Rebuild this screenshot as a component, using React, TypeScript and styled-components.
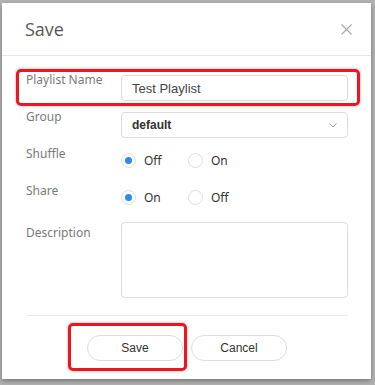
import React, {useState} from 'react';
import styled, {createGlobalStyle} from 'styled-components';

const GlobalStyle = createGlobalStyle`
    html, body {
        margin: 0;
        padding: 0;
        background: #b3b3b3;
        font-family: "Noto Sans", "Open Sans", Arial, sans-serif;
    }
`;

const Page = styled.div`
    padding: 3px 4px 6px 2px;
`;

const Modal = styled.div`
    width: 369px;
    height: 376px;
    background: #fff;
    box-shadow: 0 2px 5px rgba(0, 0, 0, 0.35);
    display: flex;
    flex-direction: column;
`;

const Header = styled.div`
    height: 52px;
    display: flex;
    align-items: center;
    justify-content: space-between;
    padding: 0 19px 0 23px;
    border-bottom: 1px solid #e6e6e6;
`;

const Title = styled.h2`
    margin: 0;
    font-family: "Open Sans", "Noto Sans", sans-serif;
    font-size: 18px;
    font-weight: 400;
    color: #595959;
`;

const CloseButton = styled.button`
    width: 12px;
    height: 12px;
    padding: 0;
    border: 0;
    background: none;
    display: flex;
    align-items: center;
    justify-content: center;
    cursor: pointer;
`;

const Body = styled.div`
    padding: 13px 0 0 14px;
`;

const Row = styled.div<{ highlight?: boolean }>`
    width: 330px;
    display: grid;
    grid-template-columns: 95px 227px;
    padding: 3px 1px 2px 7px;
    border: 3px solid ${props => props.highlight ? '#ee1420' : 'transparent'};
    border-radius: 5px;
    box-shadow: ${props => props.highlight ? '0 0 3px rgba(0, 0, 0, 0.35)' : 'none'};
`;

const Label = styled.label<{ offset?: number }>`
    font-size: 12px;
    line-height: 14px;
    color: #7a7a7a;
    margin-top: ${props => (props.offset ?? 0) - 2}px;
`;

const TextInput = styled.input`
    box-sizing: border-box;
    width: 227px;
    height: 26px;
    border: 1px solid #dcdcdc;
    border-radius: 4px;
    padding: 0 10px;
    font-family: "Liberation Sans", Arial, sans-serif;
    font-size: 13px;
    color: #444;
    outline: none;
`;

const SelectBox = styled.div`
    box-sizing: border-box;
    width: 227px;
    height: 26px;
    border: 1px solid #dcdcdc;
    border-radius: 4px;
    padding: 0 10px 0 10px;
    display: flex;
    align-items: center;
    justify-content: space-between;
    font-family: "Liberation Sans", Arial, sans-serif;
    font-size: 12px;
    font-weight: 700;
    color: #333;
`;

const RadioGroup = styled.div`
    height: 26px;
    padding-bottom: 4px;
    box-sizing: border-box;
    display: flex;
    align-items: center;
`;

const RadioOption = styled.label`
    width: 67px;
    display: flex;
    align-items: center;
    gap: 8px;
    font-size: 12px;
    color: #333;
    cursor: pointer;
`;

const RadioCircle = styled.span<{ checked: boolean }>`
    box-sizing: border-box;
    width: 15px;
    height: 15px;
    border: 1px solid #dedede;
    border-radius: 50%;
    display: flex;
    align-items: center;
    justify-content: center;

    &::after {
        content: '';
        width: 7px;
        height: 7px;
        border-radius: 50%;
        background: ${props => props.checked ? '#2a8cf0' : 'transparent'};
    }
`;

const TextArea = styled.textarea`
    box-sizing: border-box;
    width: 227px;
    height: 76px;
    margin-top: -1px;
    border: 1px solid #dcdcdc;
    border-radius: 4px;
    resize: none;
    outline: none;
`;

const Footer = styled.div`
    margin: 12px 23px 0 24px;
    padding-top: 19px;
    border-top: 1px solid #ececec;
    display: flex;
    justify-content: center;
    gap: 8px;
`;

const ButtonSlot = styled.div`
    position: relative;
`;

const Highlight = styled.div`
    position: absolute;
    top: -12px;
    left: -19px;
    right: -4px;
    bottom: -10px;
    border: 3px solid #ee1420;
    border-radius: 5px;
    box-shadow: 0 0 3px rgba(0, 0, 0, 0.35);
    pointer-events: none;
`;

const PillButton = styled.button`
    width: 96px;
    height: 26px;
    border: 1px solid #dcdcdc;
    border-radius: 13px;
    background: #fff;
    font-family: "Liberation Sans", Arial, sans-serif;
    font-size: 12px;
    color: #333;
    cursor: pointer;
`;

interface RadioRowProps {
    label: string;
    options: string[];
    value: string;
    onChange: (v: string) => void;
}

const RadioRow: React.FC<RadioRowProps> = ({label, options, value, onChange}) => (
    <Row>
        <Label>{label}</Label>
        <RadioGroup>
            {options.map(opt => (
                <RadioOption key={opt} onClick={() => onChange(opt)}>
                    <RadioCircle checked={value === opt}/>
                    {opt}
                </RadioOption>
            ))}
        </RadioGroup>
    </Row>
);

const App: React.FC = () => {
    const [name, setName] = useState('Test Playlist');
    const [shuffle, setShuffle] = useState('Off');
    const [share, setShare] = useState('On');

    return (
        <Page>
            <GlobalStyle/>
            <Modal>
                <Header>
                    <Title>Save</Title>
                    <CloseButton aria-label="Close">
                        <svg width="11" height="11" viewBox="0 0 11 11">
                            <path d="M0.5 0.5 L10.5 10.5 M10.5 0.5 L0.5 10.5" stroke="#a8a8a8" strokeWidth="1.1"/>
                        </svg>
                    </CloseButton>
                </Header>

                <Body>
                    <Row highlight>
                        <Label>Playlist Name</Label>
                        <TextInput value={name} onChange={e => setName(e.target.value)}/>
                    </Row>
                    <Row>
                        <Label>Group</Label>
                        <SelectBox>
                            default
                            <svg width="8" height="5" viewBox="0 0 8 5">
                                <path d="M0.5 0.5 L4 4 L7.5 0.5" fill="none" stroke="#a0a0a0" strokeWidth="1"/>
                            </svg>
                        </SelectBox>
                    </Row>
                    <RadioRow label="Shuffle" options={['Off', 'On']} value={shuffle} onChange={setShuffle}/>
                    <RadioRow label="Share" options={['On', 'Off']} value={share} onChange={setShare}/>
                    <Row>
                        <Label offset={5}>Description</Label>
                        <TextArea/>
                    </Row>
                </Body>

                <Footer>
                    <ButtonSlot>
                        <Highlight/>
                        <PillButton>Save</PillButton>
                    </ButtonSlot>
                    <PillButton>Cancel</PillButton>
                </Footer>
            </Modal>
        </Page>
    );
};

export default App;
